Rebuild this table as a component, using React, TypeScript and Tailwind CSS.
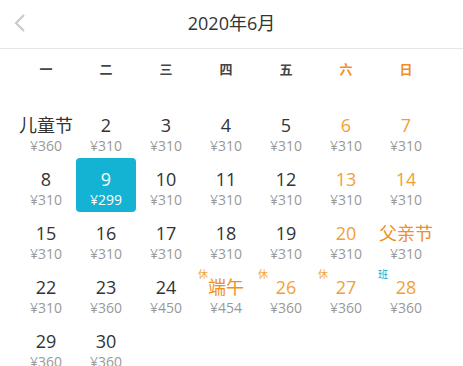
import React from "react";

type Day = {
  label: string;
  price: string;
  tone?: "weekend" | "festival";
  tag?: "休" | "班";
  selected?: boolean;
};

const weekdays = ["一", "二", "三", "四", "五", "六", "日"];

const days: (Day | null)[] = [
  { label: "儿童节", price: "¥360" },
  { label: "2", price: "¥310" },
  { label: "3", price: "¥310" },
  { label: "4", price: "¥310" },
  { label: "5", price: "¥310" },
  { label: "6", price: "¥310", tone: "weekend" },
  { label: "7", price: "¥310", tone: "weekend" },
  { label: "8", price: "¥310" },
  { label: "9", price: "¥299", selected: true },
  { label: "10", price: "¥310" },
  { label: "11", price: "¥310" },
  { label: "12", price: "¥310" },
  { label: "13", price: "¥310", tone: "weekend" },
  { label: "14", price: "¥310", tone: "weekend" },
  { label: "15", price: "¥310" },
  { label: "16", price: "¥310" },
  { label: "17", price: "¥310" },
  { label: "18", price: "¥310" },
  { label: "19", price: "¥310" },
  { label: "20", price: "¥310", tone: "weekend" },
  { label: "父亲节", price: "¥310", tone: "festival" },
  { label: "22", price: "¥310" },
  { label: "23", price: "¥360" },
  { label: "24", price: "¥450" },
  { label: "端午", price: "¥454", tone: "festival", tag: "休" },
  { label: "26", price: "¥360", tone: "weekend", tag: "休" },
  { label: "27", price: "¥360", tone: "weekend", tag: "休" },
  { label: "28", price: "¥360", tone: "weekend", tag: "班" },
  { label: "29", price: "¥360" },
  { label: "30", price: "¥360" },
];

const DayCell = ({ day }: { day: Day }) => {
  const labelColor = day.selected
    ? "text-white"
    : day.tone === "festival"
    ? "text-[#ef8f1c]"
    : day.tone === "weekend"
    ? "text-[#f2a036]"
    : "text-[#333]";

  return (
    <div
      className={
        "relative h-[54px] flex flex-col items-center pt-[8px] rounded " +
        (day.selected ? "bg-[#15b3d3]" : "")
      }>
      {day.tag && (
        <span
          className={
            "absolute top-[3px] left-[2px] text-[10px] leading-none " +
            (day.tag === "班" ? "text-[#1aa5c0]" : "text-[#f2a72e]")
          }>
          {day.tag}
        </span>
      )}
      <span className={"text-[18px] leading-[26px] " + labelColor}>
        {day.label}
      </span>
      <span
        className={
          "text-[14px] leading-[16px] " +
          (day.selected ? "text-white" : "text-[#999]")
        }>
        {day.price}
      </span>
    </div>
  );
};

export default function App() {
  return (
    <div
      className="w-[463px] h-[366px] overflow-hidden bg-white"
      style={{ fontFamily: '"Open Sans", "Noto Sans CJK SC", sans-serif' }}>
      <div className="relative h-[49px] flex items-center justify-center border-b border-[#e6e6e6]">
        <svg
          className="absolute left-[13px] top-[13px]"
          width="14"
          height="20"
          viewBox="0 0 14 20"
          fill="none">
          <path d="M11 2 L3 10 L11 18" stroke="#c8c8c8" strokeWidth="2" />
        </svg>
        <span className="text-[18px] text-[#333] mt-[-2px]">2020年6月</span>
      </div>
      <div className="pl-4 w-[436px] grid grid-cols-7 h-[41px] items-center">
        {weekdays.map((w, i) => (
          <span
            key={w}
            className={
              "text-center text-[13px] font-bold " +
              (i >= 5 ? "text-[#ef8f1c]" : "text-[#444]")
            }>
            {w}
          </span>
        ))}
      </div>
      <div className="pl-4 w-[436px] pt-[14px] grid grid-cols-7">
        {days.map((d, i) =>
          d ? <DayCell key={i} day={d} /> : <div key={i} />
        )}
      </div>
    </div>
  );
}
